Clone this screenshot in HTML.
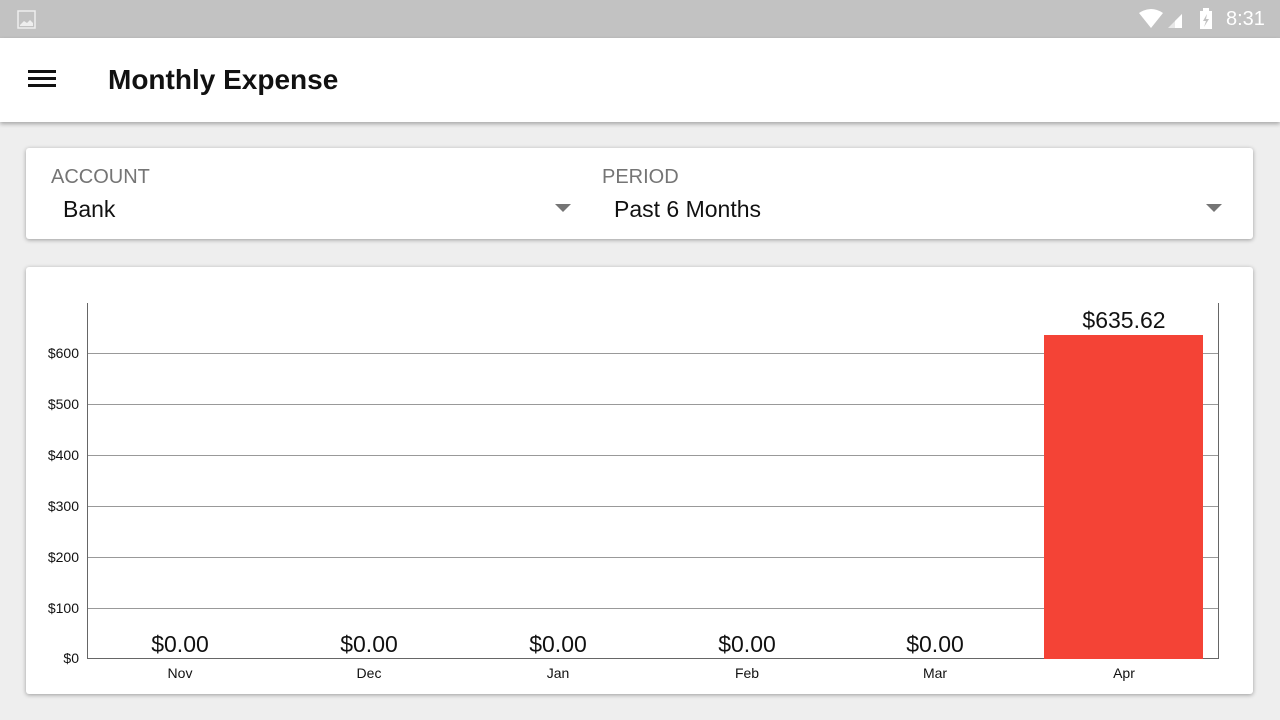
<!DOCTYPE html>
<html><head><style>
body{margin:0;width:1280px;height:720px;background:#eeeeee;font-family:"Liberation Sans",Roboto,sans-serif;position:relative;overflow:hidden}
.sb{position:absolute;left:0;top:0;width:1280px;height:38px;background:#c2c2c2}
.ab{position:absolute;left:0;top:38px;width:1280px;height:84px;background:#fff;box-shadow:0 2px 4px rgba(0,0,0,.3)}
.card{position:absolute;left:26px;width:1227px;background:#fff;border-radius:3px;box-shadow:0 1px 4px rgba(0,0,0,.35)}
.lbl{position:absolute;font-size:20px;color:#757575}
.val{position:absolute;font-size:23px;color:#111}
.tri{position:absolute;width:0;height:0;border-left:8px solid transparent;border-right:8px solid transparent;border-top:8px solid #757575}
</style></head><body>
<div class="sb">
<svg style="position:absolute;left:17px;top:10px" width="20" height="20"><rect x="1" y="1" width="17" height="17" fill="none" stroke="#eee" stroke-width="1.5"/><path d="M3 15 L7 11 L10 13 L13 10 L16 13 L16 16 L3 16Z" fill="#eee"/></svg>
<svg style="position:absolute;left:1138px;top:8px" width="80" height="22"><path d="M1 5 Q13 -3 25 5 L13 20Z" fill="#fff"/><path d="M30 20 L44 6 L44 20Z" fill="#e8e8e8"/><path d="M37 13 L44 6 L44 20 L37 20Z" fill="#fff"/><rect x="62" y="3" width="12" height="18" fill="#fff"/><rect x="65" y="0" width="6" height="3" fill="#fff"/><path d="M69 6 L65 13 L68 13 L66 19 L71 11 L68 11Z" fill="#c2c2c2"/></svg>
<div style="position:absolute;left:1226px;top:8px;font-size:20px;color:#fff">8:31</div>
</div>
<div class="ab">
<div style="position:absolute;left:28px;top:32px;width:28px;height:3px;background:#111;box-shadow:0 7px 0 #111,0 14px 0 #111"></div>
<div style="position:absolute;left:108px;top:26px;font-size:28px;font-weight:bold;color:#111">Monthly Expense</div>
</div>
<div class="card" style="top:148px;height:91px">
<div class="lbl" style="left:25px;top:18px">ACCOUNT</div>
<div class="val" style="left:37px;top:48px">Bank</div>
<div class="tri" style="left:529px;top:56px"></div>
<div class="lbl" style="left:576px;top:18px">PERIOD</div>
<div class="val" style="left:588px;top:48px">Past 6 Months</div>
<div class="tri" style="left:1180px;top:56px"></div>
</div>
<div class="card" style="top:267px;height:427px"></div>
<svg style="position:absolute;left:0;top:0" width="1280" height="720" font-family="Liberation Sans,sans-serif">
<g stroke="#999" stroke-width="1">
<line x1="87" y1="353.5" x2="1218" y2="353.5"/><line x1="87" y1="404.5" x2="1218" y2="404.5"/><line x1="87" y1="455.5" x2="1218" y2="455.5"/><line x1="87" y1="506.5" x2="1218" y2="506.5"/><line x1="87" y1="557.5" x2="1218" y2="557.5"/><line x1="87" y1="608.5" x2="1218" y2="608.5"/>
</g>
<g stroke="#666"><line x1="87.5" y1="303" x2="87.5" y2="659"/><line x1="1218.5" y1="303" x2="1218.5" y2="659"/><line x1="87" y1="658.5" x2="1218" y2="658.5"/></g>
<rect x="1044" y="335" width="159" height="324" fill="#f44336"/>
<g font-size="14" text-anchor="end" fill="#111"><text x="79" y="358">$600</text><text x="79" y="409">$500</text><text x="79" y="460">$400</text><text x="79" y="511">$300</text><text x="79" y="562">$200</text><text x="79" y="613">$100</text><text x="79" y="663">$0</text></g>
<g font-size="14" text-anchor="middle" fill="#111"><text x="180" y="678">Nov</text><text x="369" y="678">Dec</text><text x="558" y="678">Jan</text><text x="747" y="678">Feb</text><text x="935" y="678">Mar</text><text x="1124" y="678">Apr</text></g>
<g font-size="23" text-anchor="middle" fill="#111"><text x="180" y="652">$0.00</text><text x="369" y="652">$0.00</text><text x="558" y="652">$0.00</text><text x="747" y="652">$0.00</text><text x="935" y="652">$0.00</text><text x="1124" y="328">$635.62</text></g>
</svg>
</body></html>
